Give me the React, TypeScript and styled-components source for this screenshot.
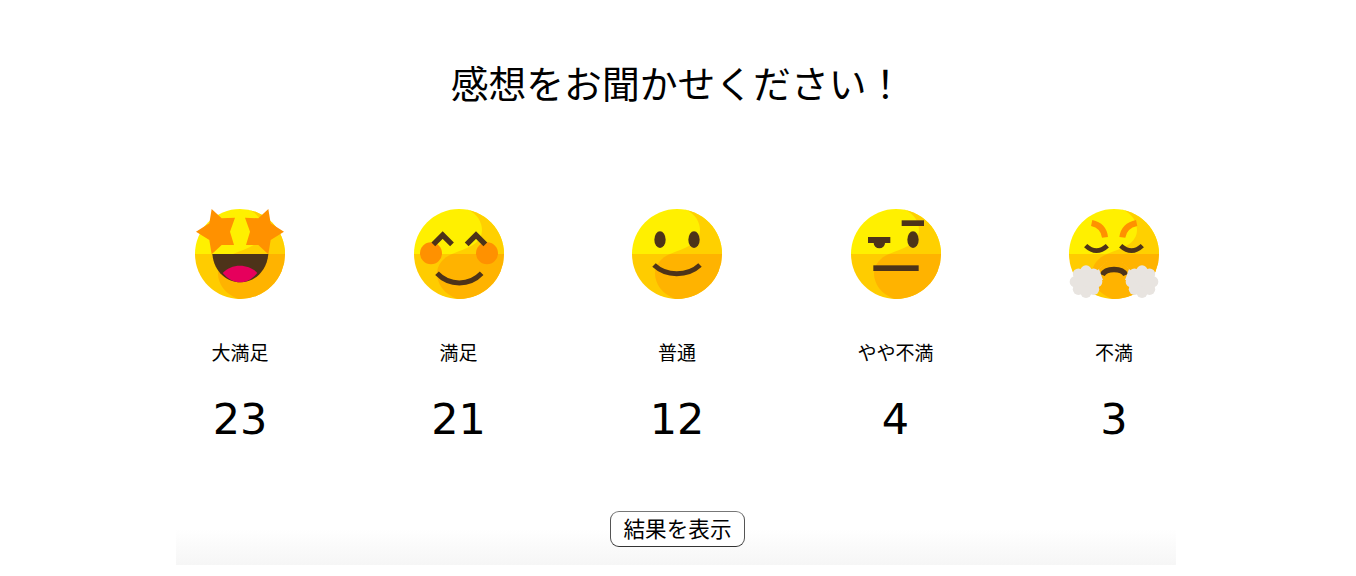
import { ReactNode, useId } from "react";
import styled, { createGlobalStyle } from "styled-components";

const GlobalStyle = createGlobalStyle`
  html, body {
    margin: 0;
    background: #ffffff;
    color: #000000;
    font-family: "Noto Sans CJK JP", "Liberation Sans", sans-serif;
  }
`;

const brown = "#4d3319";
const orange = "#ff9100";

const Page = styled.div`
  width: 1356px;
  height: 576px;
  overflow: hidden;
  display: flex;
  flex-direction: column;
  align-items: center;
`;

const Title = styled.h1`
  margin: 54px 1px 0 0;
  height: 56px;
  font-size: 37.8px;
  line-height: 56px;
  font-weight: 400;
  text-align: center;
`;

const FaceRow = styled.ul`
  list-style: none;
  margin: 99px 2px 0 0;
  padding: 0;
  display: grid;
  grid-template-columns: repeat(5, 218.5px);
`;

const FaceItem = styled.li`
  display: flex;
  flex-direction: column;
  align-items: center;
`;

const FaceIcon = styled.svg`
  display: block;
  width: 90px;
  height: 90px;
  overflow: visible;
`;

const FaceLabel = styled.div`
  margin-top: 39px;
  height: 28px;
  font-size: 19px;
  line-height: 28px;
`;

const VoteCount = styled.div`
  margin-top: 27px;
  height: 52px;
  font-family: "DejaVu Sans", sans-serif;
  font-size: 43px;
  line-height: 52px;
`;

const Footer = styled.div`
  width: 1000px;
  height: 60px;
  margin: 60px 4px 0 0;
  padding-top: 6px;
  box-sizing: border-box;
  display: flex;
  justify-content: center;
  background: linear-gradient(#ffffff 40%, #f6f6f6);
`;

const ResultButton = styled.button`
  width: 135px;
  height: 36px;
  margin-left: 3px;
  padding: 0 0 2px;
  box-sizing: border-box;
  background: #ffffff;
  border: 1px solid;
  border-color: #777777 #555555 #333333;
  border-radius: 9px;
  color: #000000;
  font-family: inherit;
  font-size: 21.6px;
  line-height: 30px;
`;

// the yellow disc every face sits on
const Disc = ({ children }: { children: ReactNode }) => {
  const clipId = useId();
  return (
    <FaceIcon viewBox="0 0 270 270">
      <clipPath id={clipId}>
        <circle cx="135" cy="135" r="135" />
      </clipPath>
      <g clipPath={`url(#${clipId})`}>
        <rect width="270" height="135" fill="#fff000" />
        <rect y="135" width="270" height="135" fill="#ffcc00" />
        <path
          d="M159 0C190 14 204 40 204 63C204 82 193 98 176 108C158 120 136 125 114 135H270V0Z"
          fill="#ffd000"
        />
        <path
          d="M114 135C88 145 69 168 69 193C69 225 90 255 129 270H270V135Z"
          fill="#ffb300"
        />
      </g>
      {children}
    </FaceIcon>
  );
};

const StarEyes = () => (
  <Disc>
    <path
      d="M50 0L80 28L120 26L105 68L117 108L80 108L50 136L43 93L3 68L43 43Z"
      fill={orange}
    />
    <path
      d="M220 0L190 28L150 26L165 68L153 108L190 108L220 136L227 93L267 68L227 43Z"
      fill={orange}
    />
    <path d="M52 135H220C215 190 175 220 136 220C97 220 57 190 52 135Z" fill={brown} />
    <path
      d="M83 192C95 178 115 170 135 170C155 170 175 178 187 192C172 210 155 220 136 220C117 220 98 210 83 192Z"
      fill="#e6005c"
    />
  </Disc>
);

const Blush = () => (
  <Disc>
    <circle cx="51" cy="133" r="33" fill={orange} />
    <circle cx="219" cy="133" r="33" fill={orange} />
    <g fill="none" stroke={brown} strokeWidth="16">
      <path d="M58 106L86 78L114 106" />
      <path d="M158 106L186 78L214 106" />
      <path d="M69 193C90 215 115 222 136 222C157 222 182 215 203 193" strokeWidth="15" />
    </g>
  </Disc>
);

const Smile = () => (
  <Disc>
    <ellipse cx="84" cy="92" rx="17" ry="25" fill={brown} />
    <ellipse cx="186" cy="92" rx="17" ry="25" fill={brown} />
    <path
      d="M66 168C87 188 112 194 134 194C156 194 183 188 204 168"
      fill="none"
      stroke={brown}
      strokeWidth="15"
    />
  </Disc>
);

const Doubtful = () => (
  <Disc>
    <g fill={brown}>
      <rect x="51" y="84" width="67" height="18" />
      <path d="M68 102A17 16 0 0 0 102 102Z" />
      <rect x="152" y="34" width="67" height="17" />
      <ellipse cx="186" cy="92" rx="17" ry="25" />
      <rect x="67" y="169" width="136" height="17" />
    </g>
  </Disc>
);

const puffs = [0, 45, 90, 135, 180, 225, 270, 315];

const Steam = () => (
  <g fill="#e8e4e0">
    <circle cx="51" cy="218" r="38" />
    {puffs.map((deg) => (
      <circle
        key={deg}
        cx={51 + 32 * Math.cos((deg * Math.PI) / 180)}
        cy={218 + 32 * Math.sin((deg * Math.PI) / 180)}
        r="17"
      />
    ))}
    <path d="M115 155L90 180L102 213L51 218Z" />
  </g>
);

const Fuming = () => (
  <Disc>
    <g fill="none">
      <path d="M68 42Q104 50 108 85" stroke={orange} strokeWidth="18" />
      <path d="M203 42Q165 50 160 85" stroke={orange} strokeWidth="18" />
      <g stroke={brown} strokeWidth="14">
        <path d="M50 110Q82 140 115 110" />
        <path d="M155 110Q188 140 220 110" />
        <path d="M100 198C110 176 160 176 170 198" strokeWidth="16" />
      </g>
    </g>
    <Steam />
    <g transform="translate(270 0) scale(-1 1)">
      <Steam />
    </g>
  </Disc>
);

const votes = [
  { label: "大満足", count: 23, face: <StarEyes /> },
  { label: "満足", count: 21, face: <Blush /> },
  { label: "普通", count: 12, face: <Smile /> },
  { label: "やや不満", count: 4, face: <Doubtful /> },
  { label: "不満", count: 3, face: <Fuming /> },
];

const App = () => {
  return (
    <Page>
      <GlobalStyle />
      <Title>感想をお聞かせください！</Title>
      <FaceRow>
        {votes.map((item) => (
          <FaceItem key={item.label}>
            {item.face}
            <FaceLabel>{item.label}</FaceLabel>
            <VoteCount>{item.count}</VoteCount>
          </FaceItem>
        ))}
      </FaceRow>
      <Footer>
        <ResultButton>結果を表示</ResultButton>
      </Footer>
    </Page>
  );
};

export default App;
